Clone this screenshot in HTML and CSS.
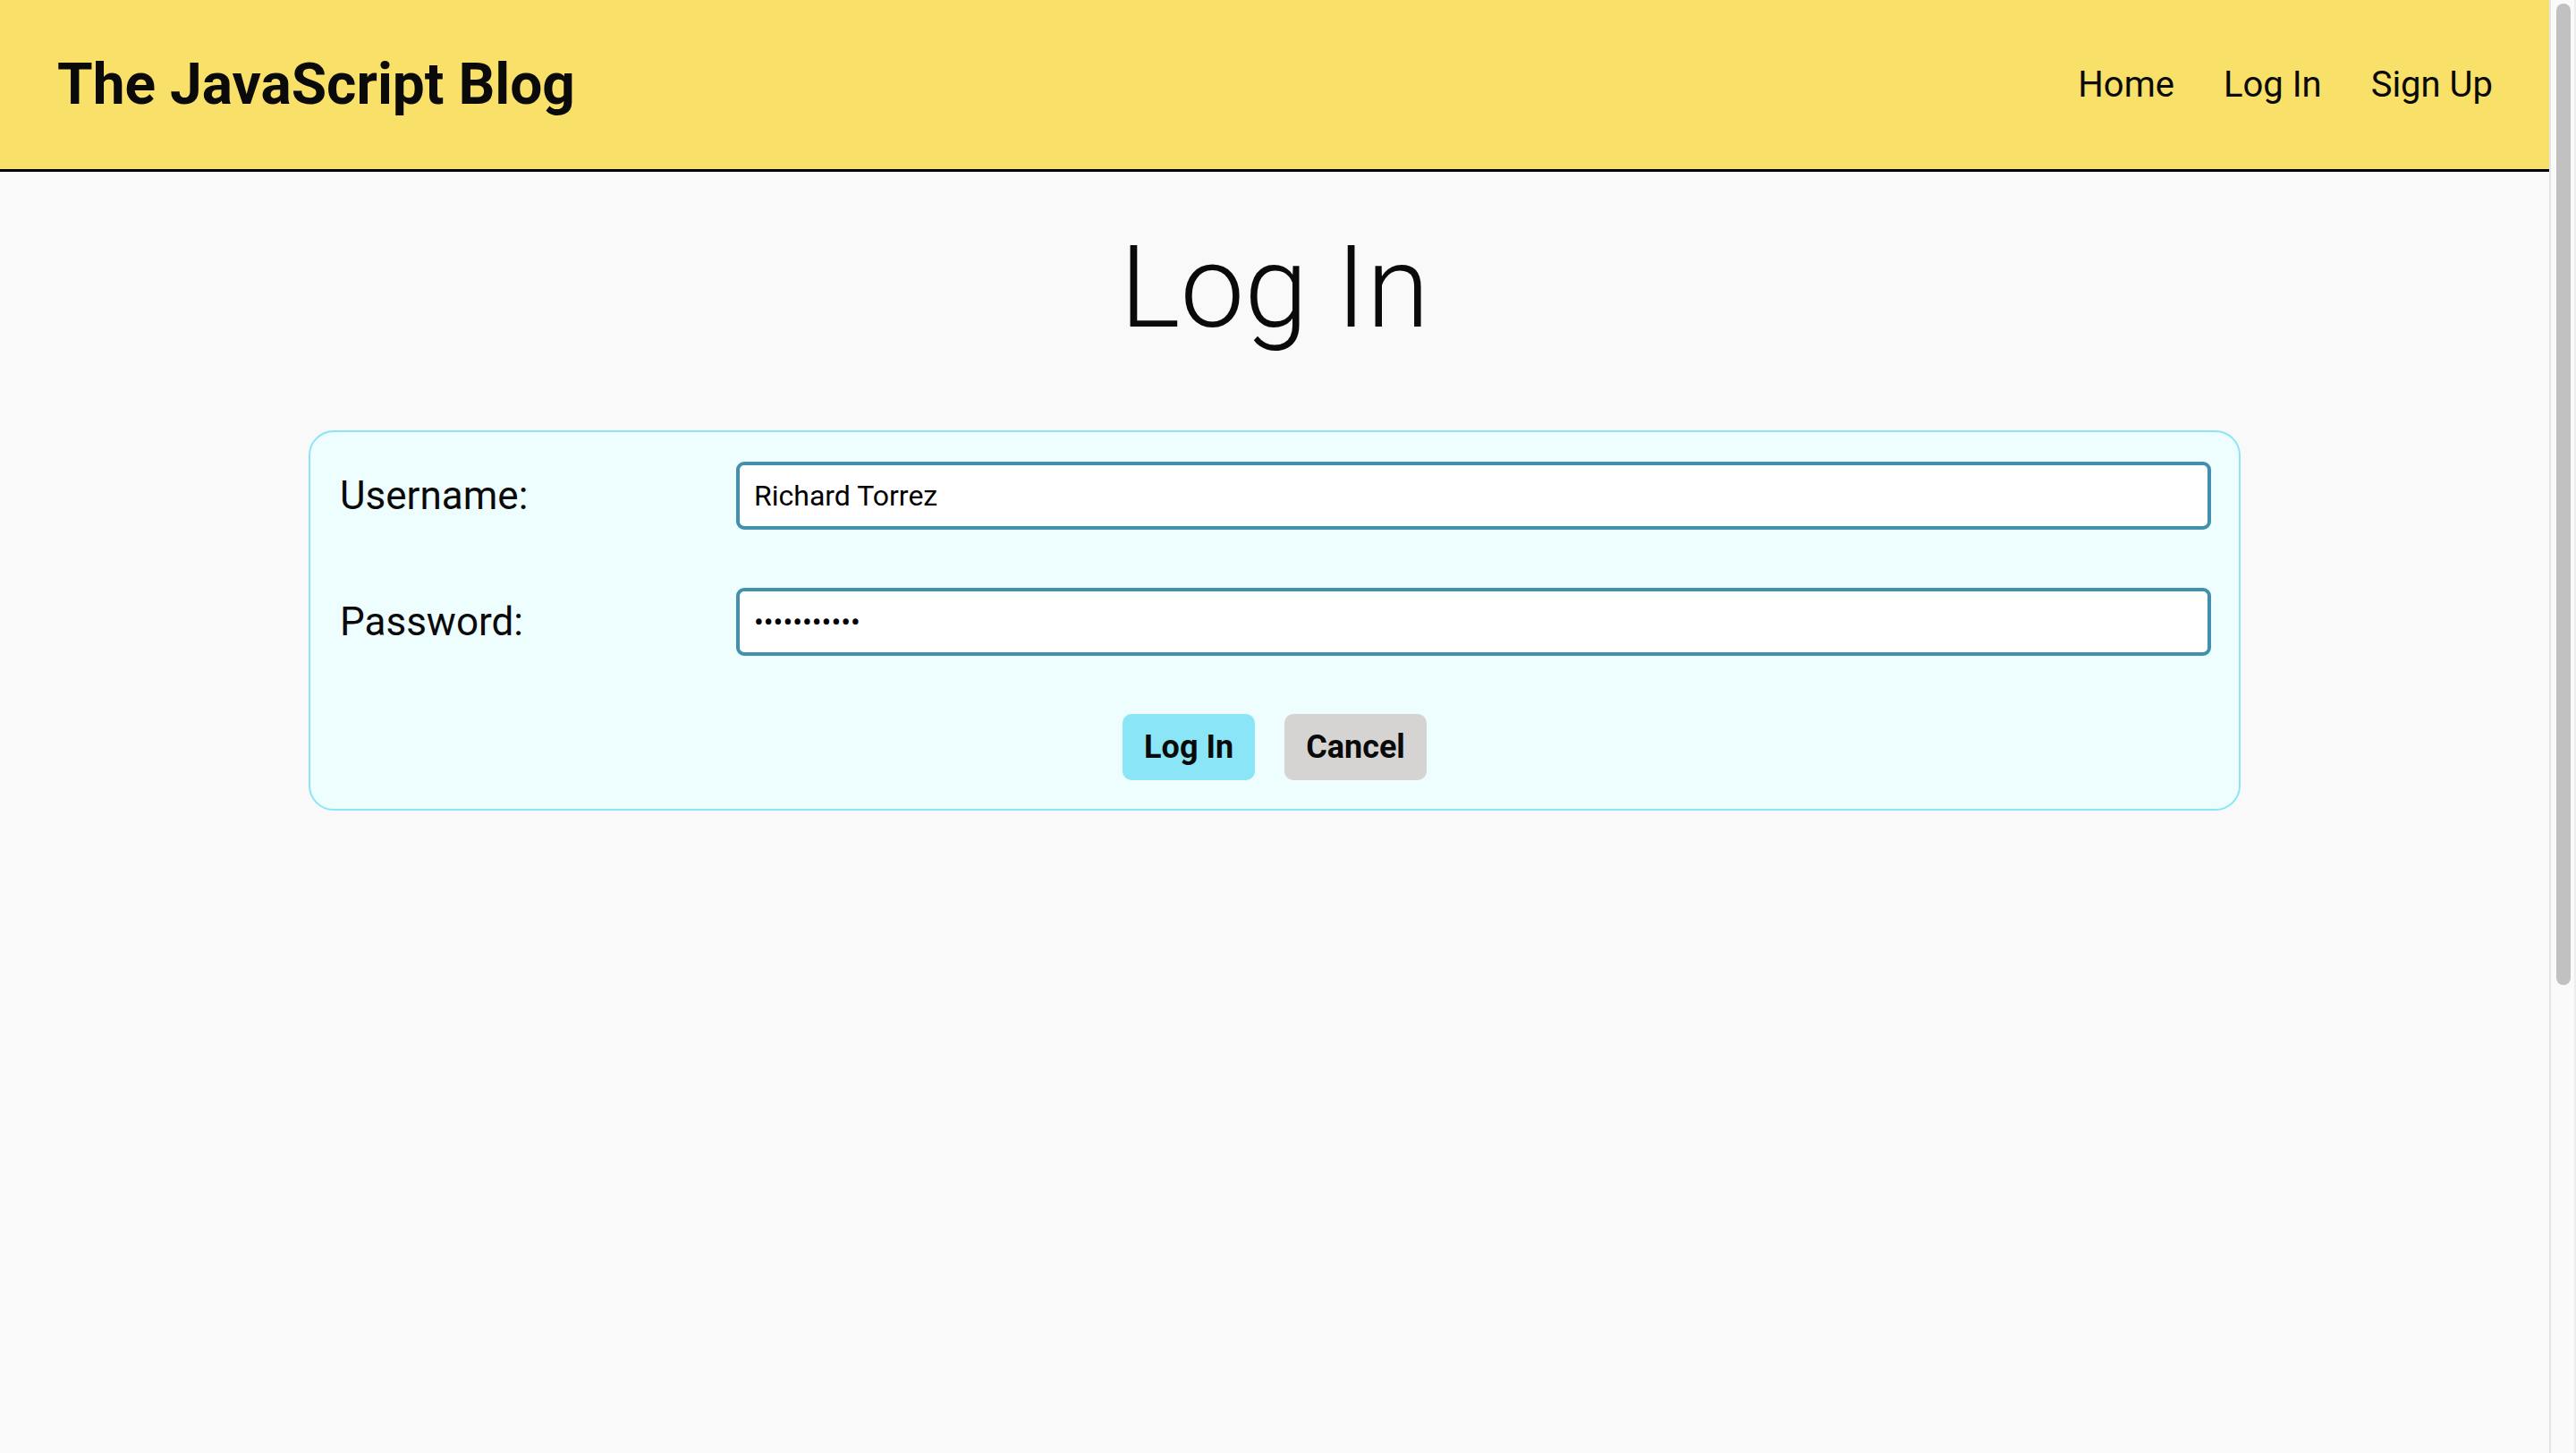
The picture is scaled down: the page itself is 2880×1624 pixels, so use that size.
FILE: index.html
```html
<!DOCTYPE html>
<html lang="en">
<head>
<meta charset="utf-8">
<title>The JavaScript Blog - Log In</title>
<link rel="stylesheet" href="styles.css">
</head>
<body>
<div class="window">
  <div class="page">
    <header class="site-header">
      <div class="brand">The JavaScript Blog</div>
      <nav class="nav">
        <a href="#" class="nav-link">Home</a>
        <a href="#" class="nav-link">Log In</a>
        <a href="#" class="nav-link">Sign Up</a>
      </nav>
    </header>
    <main class="main">
      <h1 class="page-title">Log In</h1>
      <form class="login-form">
        <div class="form-row">
          <label class="form-label" for="username">Username:</label>
          <input class="form-input" id="username" type="text" value="Richard Torrez">
        </div>
        <div class="form-row">
          <label class="form-label" for="password">Password:</label>
          <input class="form-input" id="password" type="password" value="secretpass1">
        </div>
        <div class="form-actions">
          <button type="button" class="btn btn-primary">Log In</button>
          <button type="button" class="btn btn-secondary">Cancel</button>
        </div>
      </form>
    </main>
  </div>
  <div class="scrollbar" aria-hidden="true">
    <div class="scrollbar-thumb"></div>
  </div>
</div>
</body>
</html>
```
FILE: styles.css
```css
html, body {
  margin: 0;
  height: 100%;
  overflow: hidden;
  background: #f9f9f9;
}
body {
  font-family: Roboto, "Liberation Sans", sans-serif;
  color: #0a0a0a;
}
.window {
  display: flex;
  height: 100vh;
}
.page {
  flex: 1;
  min-width: 0;
  background: #f9f9f9;
}
.scrollbar {
  width: 16px;
  flex: none;
  background: #fafafa;
  border-left: 2px solid #e4e4e4;
  border-right: 2px solid #ededed;
  padding: 4px 4px 0 6px;
  box-sizing: content-box;
}
.scrollbar-thumb {
  width: 16px;
  height: 1097px;
  background: #c1c1c1;
  border-radius: 8px;
}
.site-header {
  height: 192px;
  box-sizing: border-box;
  display: flex;
  align-items: center;
  justify-content: space-between;
  padding: 0 63px 0 64px;
  background: #f9e068;
  border-bottom: 3px solid #000;
}
.brand {
  font-size: 64px;
  font-weight: 700;
}
.nav {
  display: flex;
  gap: 55px;
}
.nav-link {
  font-size: 40px;
  color: #0a0a0a;
  text-decoration: none;
}
.main {
  padding-top: 54px;
}
.page-title {
  margin: 0 0 85px;
  text-align: center;
  font-size: 128px;
  font-weight: 300;
  line-height: 150px;
}
.login-form {
  width: 2160px;
  margin: 0 auto;
  box-sizing: border-box;
  padding: 33px 31px 32px;
  background: #eefdfe;
  border: 2px solid #8ae5f6;
  border-radius: 28px;
  display: flex;
  flex-direction: column;
  gap: 65px;
}
.form-row {
  display: flex;
  align-items: center;
}
.form-label {
  width: 445px;
  flex: none;
  font-size: 44px;
  padding-left: 2px;
  box-sizing: border-box;
}
.form-input {
  flex: 1;
  height: 76px;
  box-sizing: border-box;
  border: 4px solid #428fae;
  border-radius: 9px;
  background: #fff;
  padding: 0 16px;
  font-family: Roboto, "Liberation Sans", sans-serif;
  font-size: 32px;
  color: #000;
  outline: none;
}
.form-actions {
  display: flex;
  justify-content: center;
  gap: 33px;
}
.btn {
  height: 74px;
  padding: 0 24px;
  border: none;
  border-radius: 10px;
  font-family: Roboto, "Liberation Sans", sans-serif;
  font-size: 36px;
  font-weight: 700;
  color: #0a0a0a;
}
.btn-primary {
  background: #8ae6f7;
}
.btn-secondary {
  background: #d5d4d3;
}
```
